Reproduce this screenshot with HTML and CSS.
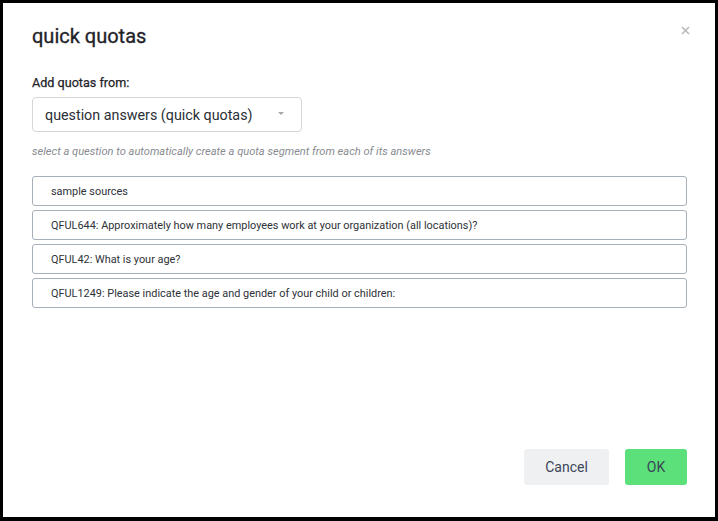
FILE: index.html
```html
<!DOCTYPE html>
<html>
<head>
<meta charset="utf-8">
<link rel="stylesheet" href="styles.css">
</head>
<body>
<div class="modal">
  <div class="header">
    <h1 class="title">quick quotas</h1>
    <button class="close" aria-label="close">
      <svg width="9" height="9" viewBox="0 0 9 9"><path d="M1 1L8 8M8 1L1 8" stroke="#b9b9b9" stroke-width="1.6" fill="none"/></svg>
    </button>
  </div>
  <div class="label">Add quotas from:</div>
  <div class="select">
    <span class="select-text">question answers (quick quotas)</span>
    <span class="caret"></span>
  </div>
  <div class="help">select a question to automatically create a quota segment from each of its answers</div>
  <div class="list">
    <div class="row">sample sources</div>
    <div class="row">QFUL644: Approximately how many employees work at your organization (all locations)?</div>
    <div class="row">QFUL42: What is your age?</div>
    <div class="row">QFUL1249: Please indicate the age and gender of your child or children:</div>
  </div>
  <div class="footer">
    <button class="btn btn-cancel">Cancel</button>
    <button class="btn btn-ok">OK</button>
  </div>
</div>
</body>
</html>
```
FILE: styles.css
```css
html, body {
  margin: 0;
  padding: 0;
  background: #000;
}
body {
  padding: 3px 3px 4px 3px;
  font-family: Roboto, "Liberation Sans", sans-serif;
}
.modal {
  background: #fff;
  height: 514px;
  box-sizing: border-box;
  padding: 19px 28px 32px 29px;
  display: flex;
  flex-direction: column;
}
.header {
  display: flex;
  justify-content: space-between;
  align-items: flex-start;
}
.title {
  margin: 0;
  font-size: 20px;
  line-height: 28px;
  font-weight: 400;
  color: #1f2329;
  -webkit-text-stroke: 0.3px #1f2329;
}
.close {
  border: none;
  background: none;
  padding: 0;
  margin: 3px -3px 0 0;
  width: 10px;
  height: 10px;
  display: flex;
  align-items: center;
  justify-content: center;
  cursor: pointer;
}
.label {
  margin-top: 25px;
  font-size: 12.6px;
  line-height: 16px;
  font-weight: 400;
  color: #1f2329;
  -webkit-text-stroke: 0.25px #1f2329;
}
.select {
  margin-top: 6px;
  width: 270px;
  height: 35px;
  box-sizing: border-box;
  border: 1px solid #d4d6da;
  border-radius: 4px;
  display: flex;
  align-items: center;
  padding: 0 17px 0 12px;
  justify-content: space-between;
}
.select-text {
  font-size: 14.3px;
  color: #2b2f36;
}
.caret {
  width: 0;
  height: 0;
  border-left: 3.5px solid transparent;
  border-right: 3.5px solid transparent;
  border-top: 3.5px solid #a8a8a8;
  margin-bottom: 2px;
}
.help {
  margin-top: 13px;
  font-size: 11.1px;
  line-height: 14px;
  font-style: italic;
  color: #888b90;
}
.list {
  margin-top: 17px;
  display: flex;
  flex-direction: column;
  gap: 4px;
}
.row {
  height: 30px;
  box-sizing: border-box;
  border: 1px solid #a6b0bb;
  border-radius: 3px;
  padding-left: 18px;
  display: flex;
  align-items: center;
  font-size: 10.9px;
  color: #2e3238;
}
.footer {
  margin-top: auto;
  display: flex;
  justify-content: flex-end;
  gap: 16px;
}
.btn {
  height: 36px;
  border: none;
  border-radius: 3px;
  font-family: Roboto, "Liberation Sans", sans-serif;
  font-size: 14px;
  color: #3a4656;
  cursor: pointer;
}
.btn-cancel {
  width: 85px;
  background: #eff0f2;
}
.btn-ok {
  width: 62px;
  background: #5be07a;
}
```
